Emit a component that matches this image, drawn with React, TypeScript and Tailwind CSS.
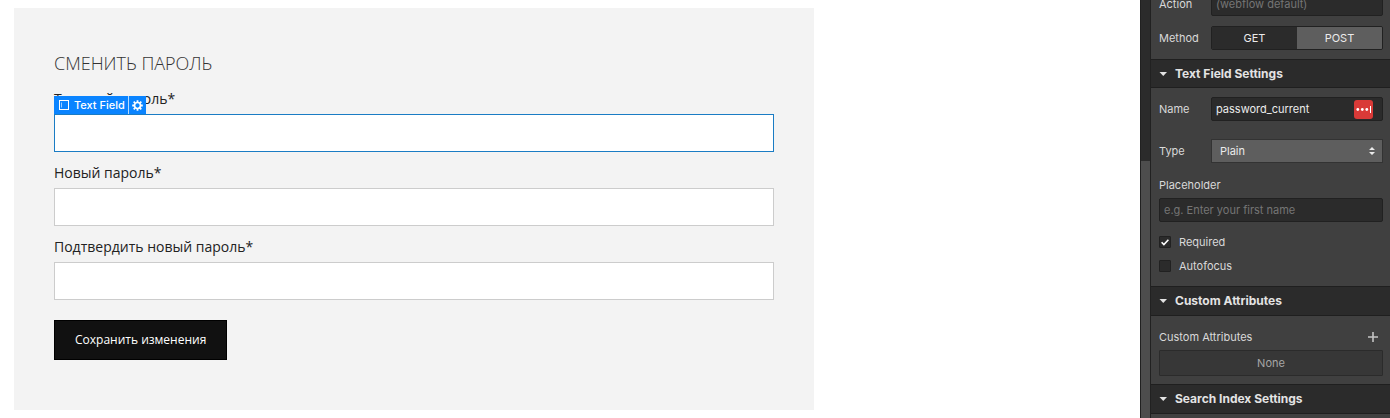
import type { ReactNode } from "react";

const fieldClass =
  "block h-[38px] w-full border bg-white px-3 text-sm outline-none";

function FormField({ id, label, selected = false }: { id: string; label: string; selected?: boolean }) {
  return (
    <div className="mb-[10px]">
      <label htmlFor={id} className="mb-[5px] block text-sm leading-[21px] font-normal text-[#222222]">
        {label}
      </label>
      <div className="relative">
        <input
          id={id}
          type="password"
          className={selected ? `${fieldClass} border-[#1a7cc4]` : `${fieldClass} border-[#cccccc]`}
        />
        {selected && (
          <div className="absolute bottom-full left-0 flex h-[18px] items-stretch bg-[#0a84ff] font-['Inter',sans-serif] text-[11px] font-medium text-white">
            <span className="flex w-[74px] items-center gap-1 pl-[5px] whitespace-nowrap">
              <svg width="11" height="11" viewBox="0 0 11 11" fill="none" stroke="currentColor" aria-hidden="true">
                <rect x="0.5" y="0.5" width="9" height="9" />
                <path d="M2.5 2.5v5" opacity="0.6" />
              </svg>
              Text Field
            </span>
            <button
              type="button"
              aria-label="Element settings"
              className="flex w-[18px] items-center justify-center border-l border-white/70"
            >
              <svg width="11" height="11" viewBox="0 0 11 11" aria-hidden="true">
                <circle cx="5.5" cy="5.5" r="3" fill="none" stroke="currentColor" strokeWidth="1.7" />
                <path
                  d="M5.5 0.2v2M5.5 8.8v2M0.2 5.5h2M8.8 5.5h2M1.7 1.7l1.4 1.4M7.9 7.9l1.4 1.4M1.7 9.3l1.4-1.4M7.9 3.1l1.4-1.4"
                  stroke="currentColor"
                  strokeWidth="1.8"
                />
              </svg>
            </button>
          </div>
        )}
      </div>
    </div>
  );
}

function SectionHeader({ children, className }: { children: ReactNode; className: string }) {
  return (
    <h2 className={`border-y border-[#1f1f1f] bg-[#2b2b2b] ${className}`}>
      <button
        type="button"
        aria-expanded="true"
        className="flex h-full w-full items-center gap-2 px-2 text-left text-[12px] font-bold text-[#e3e3e3]"
      >
        <svg width="8" height="4" viewBox="0 0 8 4" fill="currentColor" aria-hidden="true">
          <path d="M0.5 0h7.5L4.25 4z" />
        </svg>
        {children}
      </button>
    </h2>
  );
}

const darkInput =
  "h-6 w-full min-w-0 rounded-[2px] border border-[#212121] bg-[#2b2b2b] px-1 text-[11px] text-[#ebebeb] placeholder-[#757575] outline-none";

function Check({ id, label, checked = false }: { id: string; label: string; checked?: boolean }) {
  return (
    <div className="flex h-6 items-center gap-2">
      <span className="grid">
        <input
          id={id}
          type="checkbox"
          defaultChecked={checked}
          className="peer col-start-1 row-start-1 size-3 appearance-none rounded-[1px] border border-[#212121] bg-[#2b2b2b]"
        />
        <svg
          viewBox="0 0 12 12"
          className="pointer-events-none invisible col-start-1 row-start-1 size-3 peer-checked:visible"
          fill="none"
          stroke="#fff"
          strokeWidth="1.6"
          aria-hidden="true"
        >
          <path d="M2.6 6.2l2.3 2.3 4.5-4.8" />
        </svg>
      </span>
      <label htmlFor={id}>{label}</label>
    </div>
  );
}

export default function App() {
  return (
    <div className="flex h-screen overflow-hidden bg-white font-['Open_Sans','Noto_Sans',sans-serif]">
      <main className="min-w-0 flex-1 px-[14px] py-2">
        <form className="w-full max-w-[800px] bg-[#f3f3f3] px-10 pt-10 pb-[50px]">
          <h1 className="mb-[10px] text-lg leading-[30px] font-light text-[#333333]">СМЕНИТЬ ПАРОЛЬ</h1>
          <FormField id="current" label="Текущий пароль*" selected />
          <FormField id="new" label="Новый пароль*" />
          <FormField id="confirm" label="Подтвердить новый пароль*" />
          <button
            type="button"
            className="mt-5 block h-10 border border-black bg-[#111111] px-5 text-[12px] whitespace-nowrap text-white"
          >
            Сохранить изменения
          </button>
        </form>
      </main>

      <div className="flex w-[10px] shrink-0 flex-col border-l border-[#212121] bg-[#4d4d4d]" aria-hidden="true">
        <div className="h-[161px] bg-[#2b2b2b]" />
      </div>

      <aside className="w-60 shrink-0 border-l border-[#212121] bg-[#404040] font-['Inter',sans-serif] text-[11px] text-[#d9d9d9]">
        <div className="-mt-2 flex flex-col gap-[10px] px-2 pr-[7px] pb-[9px]">
          <div className="flex items-center">
            <label htmlFor="action" className="w-[52px] shrink-0">Action</label>
            <input id="action" className={darkInput} placeholder="(webflow default)" />
          </div>
          <div className="flex items-center">
            <span id="method" className="w-[52px] shrink-0">Method</span>
            <div
              role="group"
              aria-labelledby="method"
              className="flex h-6 flex-1 overflow-hidden rounded-[2px] border border-[#212121] text-[#ebebeb]"
            >
              <button type="button" aria-pressed="true" className="flex-1 bg-[#2b2b2b]">GET</button>
              <button type="button" aria-pressed="false" className="flex-1 bg-[#5e5e5e]">POST</button>
            </div>
          </div>
        </div>

        <SectionHeader className="h-[29px]">Text Field Settings</SectionHeader>
        <div className="pt-[9px] pr-[7px] pb-2 pl-2">
          <div className="flex items-center">
            <label htmlFor="name" className="w-[52px] shrink-0">Name</label>
            <div className="relative min-w-0 flex-1">
              <input id="name" className={darkInput} defaultValue="password_current" />
              <button
                type="button"
                aria-label="Fill password"
                className="absolute inset-y-0 right-[10px] my-auto h-[19px] w-[19px] rounded-[3px] bg-[#d93a38]"
              >
                <svg viewBox="0 0 19 19" className="size-full" fill="#fff" aria-hidden="true">
                  <circle cx="3.8" cy="9.5" r="1.4" />
                  <circle cx="8.3" cy="9.5" r="1.4" />
                  <circle cx="12.8" cy="9.5" r="1.4" />
                  <rect x="16" y="6" width="1" height="7" />
                </svg>
              </button>
            </div>
          </div>
          <div className="mt-[18px] flex items-center">
            <label htmlFor="type" className="w-[52px] shrink-0">Type</label>
            <div className="relative min-w-0 flex-1">
              <select
                id="type"
                className="block h-6 w-full appearance-none border border-[#333333] bg-[#5e5e5e] px-2 text-[11px] text-[#ebebeb] outline-none"
              >
                <option>Plain</option>
              </select>
              <svg
                className="pointer-events-none absolute inset-y-0 right-2 my-auto"
                width="6"
                height="8"
                viewBox="0 0 6 8"
                fill="#ebebeb"
                aria-hidden="true"
              >
                <path d="M0 3l3-3 3 3zM0 5h6L3 8z" />
              </svg>
            </div>
          </div>
          <label htmlFor="placeholder" className="mt-[14px] mb-1 block leading-[17px]">Placeholder</label>
          <input id="placeholder" className={`block ${darkInput}`} placeholder="e.g. Enter your first name" />
          <div className="mt-2">
            <Check id="required" label="Required" checked />
            <Check id="autofocus" label="Autofocus" />
          </div>
        </div>

        <SectionHeader className="h-[30px]">Custom Attributes</SectionHeader>
        <div className="pt-3 pr-[7px] pb-2 pl-2">
          <div className="mb-1 flex h-[18px] items-center justify-between pr-[5px]">
            <span>Custom Attributes</span>
            <button type="button" aria-label="Add attribute">
              <svg width="10" height="10" viewBox="0 0 10 10" stroke="#c4c4c4" strokeWidth="1.6" aria-hidden="true">
                <path d="M5 0v10M0 5h10" />
              </svg>
            </button>
          </div>
          <div className="flex h-[26px] items-center justify-center rounded-[1px] border border-[#2b2b2b] bg-[#373737] text-[#a6a6a6]">
            None
          </div>
        </div>

        <SectionHeader className="h-[30px]">Search Index Settings</SectionHeader>
      </aside>
    </div>
  );
}
